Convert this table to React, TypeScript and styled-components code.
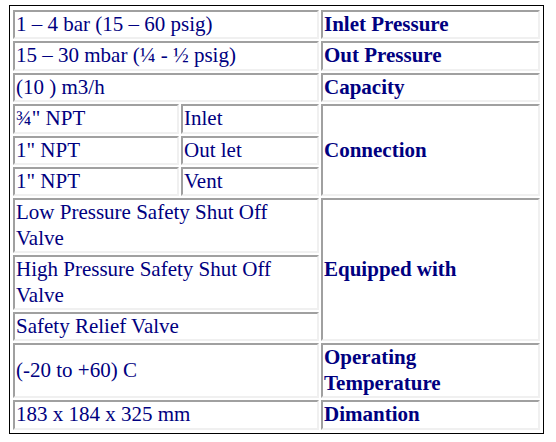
import React from "react"
import styled, { createGlobalStyle } from "styled-components"

const Global = createGlobalStyle`
    body{
        margin:0;
        background:#ffffff;
    }
`

const Sheet = styled.table`
    margin:5px 0 0 9px;
    width:535px;
    table-layout:fixed;
    border-collapse:separate;
    border-spacing:2px;
    padding:2px 1px 1px 1px;
    border:1px solid #000000;
    font-family:"Liberation Serif","Times New Roman",serif;
    font-size:21px;
    line-height:25.4px;
    color:#000080;
`

const Col = styled.col<{ $w: number }>`
    width:${(p) => p.$w}px;
`

const Cell = styled.td<{ $head?: boolean }>`
    padding:0 1px;
    vertical-align:middle;
    text-align:left;
    border-style:solid;
    border-width:2px;
    border-color:#a0a0a0 #f0f0f0 #f0f0f0 #a0a0a0;
    font-weight:${(p) => (p.$head ? 700 : 400)};
`

export default function App() {
    return (
        <>
            <Global />
            <Sheet>
                <colgroup>
                    <Col $w={166} />
                    <Col $w={138} />
                    <Col $w={219} />
                </colgroup>
                <tbody>
                    <tr>
                        <Cell colSpan={2}>1 – 4 bar (15 – 60 psig)</Cell>
                        <Cell $head>Inlet Pressure</Cell>
                    </tr>
                    <tr>
                        <Cell colSpan={2}>15 – 30 mbar (¼ - ½ psig)</Cell>
                        <Cell $head>Out Pressure</Cell>
                    </tr>
                    <tr>
                        <Cell colSpan={2}>(10 ) m3/h</Cell>
                        <Cell $head>Capacity</Cell>
                    </tr>
                    <tr>
                        <Cell>¾" NPT</Cell>
                        <Cell>Inlet</Cell>
                        <Cell $head rowSpan={3}>Connection</Cell>
                    </tr>
                    <tr>
                        <Cell>1" NPT</Cell>
                        <Cell>Out let</Cell>
                    </tr>
                    <tr>
                        <Cell>1" NPT</Cell>
                        <Cell>Vent</Cell>
                    </tr>
                    <tr>
                        <Cell colSpan={2}>Low Pressure Safety Shut Off Valve</Cell>
                        <Cell $head rowSpan={3}>Equipped with</Cell>
                    </tr>
                    <tr>
                        <Cell colSpan={2}>High Pressure Safety Shut Off Valve</Cell>
                    </tr>
                    <tr>
                        <Cell colSpan={2}>Safety Relief Valve</Cell>
                    </tr>
                    <tr>
                        <Cell colSpan={2}>(-20 to +60) C</Cell>
                        <Cell $head>Operating Temperature</Cell>
                    </tr>
                    <tr>
                        <Cell colSpan={2}>183 x 184 x 325 mm</Cell>
                        <Cell $head>Dimantion</Cell>
                    </tr>
                </tbody>
            </Sheet>
        </>
    )
}
